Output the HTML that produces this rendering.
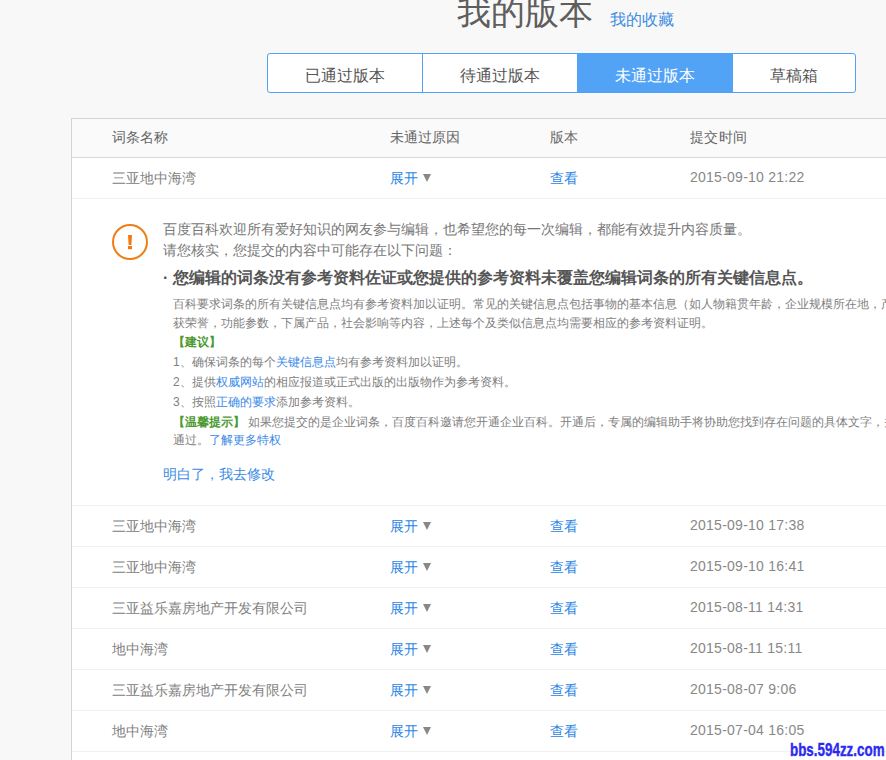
<!DOCTYPE html>
<html><head><meta charset="utf-8">
<style>
*{margin:0;padding:0;box-sizing:border-box}
html,body{width:886px;height:760px;overflow:hidden;background:#f8f8f8;font-family:"Liberation Sans",sans-serif;color:#666}
.abs{position:absolute;white-space:nowrap}
.title{left:457px;top:-8px;font-size:34px;line-height:40px;color:#5e5e5e}
.fav{left:610px;top:10px;font-size:16px;line-height:20px;color:#3f8de2}
.tabs{position:absolute;left:267px;top:53px;width:589px;height:40px;border:1px solid #52a2f2;border-radius:3px;background:#fff;overflow:hidden}
.tab{position:absolute;top:0;height:38px;line-height:44px;font-size:16px;color:#555;text-align:center}
.t1{left:0;width:154px}
.t2{left:154px;width:155px;border-left:1px solid #52a2f2}
.t3{left:309px;width:156px;background:#52a3f5;color:#fff}
.t4{left:465px;width:122px}
.tbl{position:absolute;left:71px;top:118px;width:900px;height:700px;border:1px solid #d3d3d3;background:#fff}
.hdr{position:absolute;left:0;top:0;width:100%;height:39px;background:#fafafa;border-bottom:1px solid #d8d8d8}
.row{position:absolute;left:0;width:100%;height:41px;border-bottom:1px solid #f1f1f1}
.c{position:absolute;top:0;line-height:40px;font-size:14px;white-space:nowrap}
.c1{left:40px;color:#808080}
.c2{left:318px;color:#2b85e4}
.c3{left:478px;color:#2b85e4}
.c4{left:618px;top:-1px;color:#888;letter-spacing:0.25px}
.hdr .c{line-height:36px;color:#666}
.hdr .c4{top:0}
.tri{position:absolute;left:33px;top:16px;width:0;height:0;border-left:4.5px solid transparent;border-right:4.5px solid transparent;border-top:8.5px solid #888}
.panel{position:absolute;left:0;top:80px;width:100%;height:307px;border-bottom:1px solid #f1f1f1}

.p14{font-size:14px;line-height:20px;color:#777}
.p12{font-size:12px;line-height:20px;color:#808080}
.h18{font-size:16px;line-height:24px;font-weight:bold;color:#555}
.grn{color:#4a9a2f;font-weight:bold}
.lnk{color:#3a8ae6}
.icon{position:absolute;left:112px;top:224px;width:36px;height:36px;border:2px solid #f07c14;border-radius:50%;color:#f07c14;font-weight:bold;font-size:18px;line-height:32px;text-align:center}

.wm{left:790px;top:739px;font-size:19px;line-height:22px;font-weight:bold;color:#2b2bef;transform:scaleX(0.705);transform-origin:0 0;-webkit-text-stroke:0.4px #2b2bef}
</style></head><body>
<div class="abs title">我的版本</div>
<div class="abs fav">我的收藏</div>
<div class="tabs">
  <div class="tab t1">已通过版本</div>
  <div class="tab t2">待通过版本</div>
  <div class="tab t3">未通过版本</div>
  <div class="tab t4">草稿箱</div>
</div>
<div class="tbl">
  <div class="hdr"><span class="c c1">词条名称</span><span class="c c2" style="color:#666">未通过原因</span><span class="c c3" style="color:#666">版本</span><span class="c c4" style="color:#666">提交时间</span></div>
  <div class="row" style="top:39px"><span class="c c1">三亚地中海湾</span><span class="c c2">展开<i class="tri"></i></span><span class="c c3">查看</span><span class="c c4">2015-09-10 21:22</span></div>
  <div class="panel" style="top:80px"></div>
  <div class="row" style="top:387px"><span class="c c1">三亚地中海湾</span><span class="c c2">展开<i class="tri"></i></span><span class="c c3">查看</span><span class="c c4">2015-09-10 17:38</span></div>
  <div class="row" style="top:428px"><span class="c c1">三亚地中海湾</span><span class="c c2">展开<i class="tri"></i></span><span class="c c3">查看</span><span class="c c4">2015-09-10 16:41</span></div>
  <div class="row" style="top:469px"><span class="c c1">三亚益乐嘉房地产开发有限公司</span><span class="c c2">展开<i class="tri"></i></span><span class="c c3">查看</span><span class="c c4">2015-08-11 14:31</span></div>
  <div class="row" style="top:510px"><span class="c c1">地中海湾</span><span class="c c2">展开<i class="tri"></i></span><span class="c c3">查看</span><span class="c c4">2015-08-11 15:11</span></div>
  <div class="row" style="top:551px"><span class="c c1">三亚益乐嘉房地产开发有限公司</span><span class="c c2">展开<i class="tri"></i></span><span class="c c3">查看</span><span class="c c4">2015-08-07 9:06</span></div>
  <div class="row" style="top:592px"><span class="c c1">地中海湾</span><span class="c c2">展开<i class="tri"></i></span><span class="c c3">查看</span><span class="c c4">2015-07-04 16:05</span></div>
</div>

<div class="icon"></div><svg class="excl" width="8" height="18" style="position:absolute;left:126px;top:234px"><path d="M2 1 L6 1 L5.4 11 L2.6 11 Z" fill="#f07a10"/><rect x="2" y="12" width="4" height="3.2" fill="#f07a10"/></svg>
<div class="abs p14" style="left:163px;top:219px">百度百科欢迎所有爱好知识的网友参与编辑，也希望您的每一次编辑，都能有效提升内容质量。</div>
<div class="abs p14" style="left:163px;top:240px">请您核实，您提交的内容中可能存在以下问题：</div>
<div class="abs h18" style="left:163px;top:266px">· 您编辑的词条没有参考资料佐证或您提供的参考资料未覆盖您编辑词条的所有关键信息点。</div>
<div class="abs p12" style="left:173px;top:294px">百科要求词条的所有关键信息点均有参考资料加以证明。常见的关键信息点包括事物的基本信息（如人物籍贯年龄，企业规模所在地，产品价格等），荣</div>
<div class="abs p12" style="left:173px;top:313px">获荣誉，功能参数，下属产品，社会影响等内容，上述每个及类似信息点均需要相应的参考资料证明。</div>
<div class="abs p12 grn" style="left:173px;top:332px">【建议】</div>
<div class="abs p12" style="left:173px;top:352px">1、确保词条的每个<span class="lnk">关键信息点</span>均有参考资料加以证明。</div>
<div class="abs p12" style="left:173px;top:372px">2、提供<span class="lnk">权威网站</span>的相应报道或正式出版的出版物作为参考资料。</div>
<div class="abs p12" style="left:173px;top:392px">3、按照<span class="lnk">正确的要求</span>添加参考资料。</div>
<div class="abs p12" style="left:173px;top:412px"><span class="grn">【温馨提示】</span> 如果您提交的是企业词条，百度百科邀请您开通企业百科。开通后，专属的编辑助手将协助您找到存在问题的具体文字，并</div>
<div class="abs p12" style="left:173px;top:430px">通过。<span class="lnk">了解更多特权</span></div>
<div class="abs p14 lnk" style="left:163px;top:464px">明白了，我去修改</div>
<div class="abs wm">bbs.594zz.com</div>
</body></html>
